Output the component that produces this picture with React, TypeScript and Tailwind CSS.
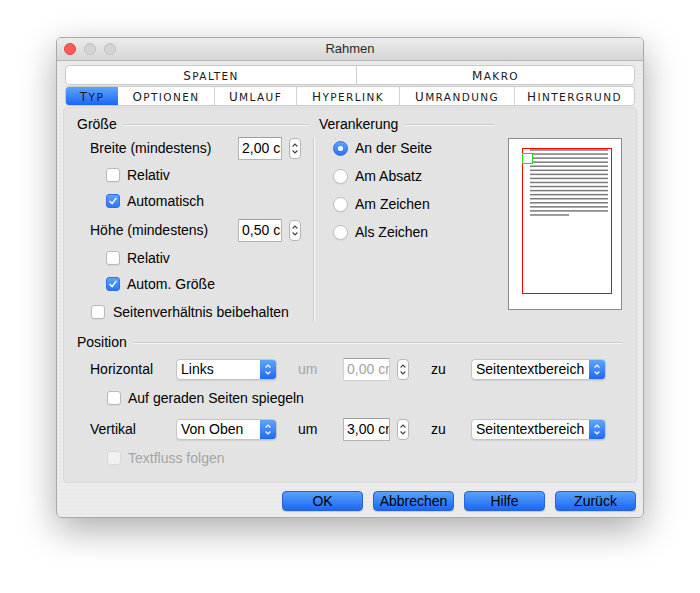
import React from "react";

function SC({ t }: { t: string }) {
  return (
    <span className="tracking-[1.4px] font-['DejaVu_Sans',sans-serif] text-[#1a1a1a]">
      <span className="text-[12px]">{t[0]}</span>
      <span className="text-[10.5px]">{t.slice(1).toUpperCase()}</span>
    </span>
  );
}

function Check({ checked = false, disabled = false }: { checked?: boolean; disabled?: boolean }) {
  if (checked)
    return (
      <span className="w-[14px] h-[14px] shrink-0 rounded-[3px] bg-linear-to-b from-[#5ea3fd] to-[#2b74f7] border border-[#2f6fe0] flex items-center justify-center">
        <svg width="10" height="10" viewBox="0 0 10 10">
          <path d="M2 5.4 L4.1 7.6 L8 2.4" fill="none" stroke="white" strokeWidth="1.5" strokeLinecap="round" strokeLinejoin="round" />
        </svg>
      </span>
    );
  return (
    <span
      className={`w-[14px] h-[14px] shrink-0 rounded-[3px] border ${
        disabled ? "border-[#d8d8d8] bg-[#f1f1f1]" : "border-[#b9b9b9] bg-white shadow-[0_1px_1px_rgba(0,0,0,0.06)]"
      }`}
    />
  );
}

function Radio({ on = false }: { on?: boolean }) {
  if (on)
    return (
      <span className="w-[15px] h-[15px] shrink-0 rounded-full bg-linear-to-b from-[#5ea3fd] to-[#2b74f7] border border-[#2f6fe0] flex items-center justify-center">
        <span className="w-[5px] h-[5px] rounded-full bg-white" />
      </span>
    );
  return <span className="w-[15px] h-[15px] shrink-0 rounded-full bg-white border border-[#bcbcbc] shadow-[0_1px_1px_rgba(0,0,0,0.06)]" />;
}

function Stepper() {
  return (
    <span className="w-[12px] h-[21px] shrink-0 rounded-[4px] bg-white border border-[#b5b5b5] flex items-center justify-center">
      <svg width="8" height="15" viewBox="0 0 8 15">
        <path d="M1.6 5.5 L4 3 L6.4 5.5 M1.6 9.5 L4 12 L6.4 9.5" stroke="#444" strokeWidth="1.1" fill="none" />
      </svg>
    </span>
  );
}

function Input({ v, w, disabled = false }: { v: string; w: string; disabled?: boolean }) {
  return (
    <div
      className={`${w} h-[23px] shrink-0 bg-white border border-[#b3b3b3] border-t-[#9e9e9e] pl-[3px] text-[14px] leading-[21px] overflow-hidden whitespace-nowrap ${
        disabled ? "text-[#a3a3a3] border-[#d0d0d0]" : "text-black"
      }`}
    >
      {v}
    </div>
  );
}

function Select({ label, w }: { label: string; w: string }) {
  return (
    <div className={`${w} h-[21px] shrink-0 rounded-[4px] bg-white border border-[#c4c4c4] shadow-[0_1px_1px_rgba(0,0,0,0.08)] flex overflow-hidden`}>
      <div className="flex-1 pl-[4px] text-[14px] leading-[19px] text-black whitespace-nowrap overflow-hidden">{label}</div>
      <div className="w-[16px] shrink-0 bg-linear-to-b from-[#5ea3fd] to-[#1d6af5] flex items-center justify-center">
        <svg width="8" height="15" viewBox="0 0 8 15">
          <path d="M1.6 5.5 L4 3 L6.4 5.5 M1.6 9.5 L4 12 L6.4 9.5" stroke="white" strokeWidth="1.2" fill="none" />
        </svg>
      </div>
    </div>
  );
}

function Heading({ t, cls }: { t: string; cls: string }) {
  return (
    <div className={`h-[20px] flex items-center ${cls}`}>
      <span className="text-[14px] text-black">{t}</span>
      <span className="flex-1 ml-[6px] h-[1px] bg-[#cbcbcb] shadow-[0_1px_0_#f6f6f6]" />
    </div>
  );
}

function CheckRow({ label, checked, h, pl, gap = "ml-[7px]", disabled = false }: { label: string; checked?: boolean; h: string; pl: string; gap?: string; disabled?: boolean }) {
  return (
    <div className={`${h} ${pl} flex items-center`}>
      <Check checked={checked} disabled={disabled} />
      <span className={`${gap} text-[14px] ${disabled ? "text-[#a5a5a5]" : "text-black"}`}>{label}</span>
    </div>
  );
}

function Preview() {
  const lines = [];
  for (let i = 0; i < 17; i++) {
    const y = 12 + i * 4.06;
    lines.push(<rect key={i} x={22} y={y - 0.75} width={i === 16 ? 39 : 78} height={1.5} fill="#7a7a7a" />);
  }
  return (
    <svg width="114" height="172" viewBox="0 0 114 172" className="shrink-0">
      <rect x="0.5" y="0.5" width="113" height="171" fill="white" stroke="#8c8c8c" />
      <rect x="14.5" y="10.5" width="89" height="145" fill="white" stroke="#ff0000" />
      {lines}
      <rect x="14.5" y="15.5" width="10" height="10" fill="white" stroke="#22dd11" />
    </svg>
  );
}

function Btn({ t }: { t: string }) {
  return (
    <div className="w-[81px] h-[20px] rounded-[4px] bg-linear-to-b from-[#58a0fd] to-[#1b66f4] border border-[#2a63d6] shadow-[0_1px_1px_rgba(0,0,0,0.15)] flex items-center justify-center text-[14px] text-black">
      {t}
    </div>
  );
}

export default function App() {
  return (
    <div className="w-[700px] h-[593px] bg-white pt-[37px] pl-[56px] font-['Liberation_Sans',Arial,sans-serif] overflow-hidden">
      <div className="w-[588px] h-[481px] rounded-[5px] border border-[#a9a9a9] shadow-[0_12px_36px_rgba(0,0,0,0.33)] overflow-hidden flex flex-col bg-[repeating-linear-gradient(0deg,#ececec_0px,#ececec_2px,#e9e9e9_2px,#e9e9e9_4px)]">
        {/* Title bar */}
        <div className="h-[23px] shrink-0 relative flex items-center pl-[7px] gap-[8px] bg-linear-to-b from-[#ececec] to-[#d6d6d6] border-b border-[#b6b6b6]">
          <span className="w-[12px] h-[12px] rounded-full bg-[#fc5b57] border border-[#e2463f]" />
          <span className="w-[12px] h-[12px] rounded-full bg-[#d3d3d3] border border-[#c2c2c2]" />
          <span className="w-[12px] h-[12px] rounded-full bg-[#d3d3d3] border border-[#c2c2c2]" />
          <span className="absolute inset-0 flex items-center justify-center text-[13px] text-[#2a2a2a]">Rahmen</span>
        </div>

        <div className="flex-1 flex flex-col px-[6px] pt-[4px]">
          {/* Tabs */}
          <div className="mx-[2px] flex flex-col gap-[1px]">
            <div className="h-[20px] flex rounded-[4px] bg-white border border-[#c9c9c9] overflow-hidden">
              <div className="w-[291px] flex items-center justify-center border-r border-[#cfcfcf]"><SC t="Spalten" /></div>
              <div className="flex-1 flex items-center justify-center"><SC t="Makro" /></div>
            </div>
            <div className="h-[20px] flex rounded-[4px] bg-white border border-[#c9c9c9] overflow-hidden">
              <div className="w-[52px] flex items-center justify-center bg-linear-to-b from-[#5ea3fd] to-[#1b65f5]"><SC t="Typ" /></div>
              <div className="w-[97px] flex items-center justify-center border-r border-[#d3d3d3]"><SC t="Optionen" /></div>
              <div className="w-[82px] flex items-center justify-center border-r border-[#d3d3d3]"><SC t="Umlauf" /></div>
              <div className="w-[103px] flex items-center justify-center border-r border-[#d3d3d3]"><SC t="Hyperlink" /></div>
              <div className="w-[115px] flex items-center justify-center border-r border-[#d3d3d3]"><SC t="Umrandung" /></div>
              <div className="flex-1 flex items-center justify-center"><SC t="Hintergrund" /></div>
            </div>
          </div>

          {/* Panel */}
          <div className="mt-[1px] h-[376px] rounded-[4px] bg-[#e3e3e3] border border-[#dadada] flex flex-col">
            <div className="flex pt-[6px]">
              {/* Left column */}
              <div className="w-[249px] flex flex-col">
                <Heading t="Größe" cls="pl-[13px] pr-[4px]" />
                <div className="h-[28px] pl-[26px] flex items-center">
                  <span className="w-[148px] text-[14px] text-black">Breite (mindestens)</span>
                  <Input v="2,00 cm" w="w-[44px]" />
                  <span className="ml-[7px]"><Stepper /></span>
                </div>
                <CheckRow label="Relativ" h="h-[26px]" pl="pl-[42px]" />
                <CheckRow label="Automatisch" checked h="h-[26px]" pl="pl-[42px]" />
                <div className="h-[32px] pl-[26px] flex items-center">
                  <span className="w-[148px] text-[14px] text-black">Höhe (mindestens)</span>
                  <Input v="0,50 cm" w="w-[44px]" />
                  <span className="ml-[7px]"><Stepper /></span>
                </div>
                <CheckRow label="Relativ" h="h-[24px]" pl="pl-[42px]" />
                <CheckRow label="Autom. Größe" checked h="h-[28px]" pl="pl-[42px]" />
                <CheckRow label="Seitenverhältnis beibehalten" h="h-[28px]" pl="pl-[27px]" gap="ml-[8px]" />
              </div>
              {/* Right column */}
              <div className="flex">
                <div className="w-[181px] flex flex-col">
                  <Heading t="Verankerung" cls="pl-[6px]" />
                  <div className="flex">
                    <div className="w-[1px] mt-[4px] h-[185px] bg-[#cdcdcd] shadow-[1px_0_0_#f5f5f5]" />
                    <div className="flex flex-col pl-[19px]">
                      {["An der Seite", "Am Absatz", "Am Zeichen", "Als Zeichen"].map((t, i) => (
                        <div key={t} className="h-[28px] flex items-center">
                          <Radio on={i === 0} />
                          <span className="ml-[7px] text-[14px] text-black">{t}</span>
                        </div>
                      ))}
                    </div>
                  </div>
                </div>
                <div className="ml-[14px] mt-[24px]">
                  <Preview />
                </div>
              </div>
            </div>

            {/* Position */}
            <div className="mt-[6px] flex flex-col">
              <Heading t="Position" cls="pl-[13px] pr-[14px]" />
              <div className="h-[34px] pl-[26px] flex items-center">
                <span className="w-[86px] text-[14px] text-black">Horizontal</span>
                <Select label="Links" w="w-[101px]" />
                <span className="ml-[21px] w-[45px] text-[14px] text-[#a5a5a5]">um</span>
                <Input v="0,00 cm" w="w-[47px]" disabled />
                <span className="ml-[7px]"><Stepper /></span>
                <span className="ml-[22px] w-[40px] text-[14px] text-black">zu</span>
                <Select label="Seitentextbereich" w="w-[135px]" />
              </div>
              <CheckRow label="Auf geraden Seiten spiegeln" h="h-[24px]" pl="pl-[43px]" />
              <div className="h-[38px] pl-[26px] flex items-center">
                <span className="w-[86px] text-[14px] text-black">Vertikal</span>
                <Select label="Von Oben" w="w-[101px]" />
                <span className="ml-[21px] w-[45px] text-[14px] text-black">um</span>
                <Input v="3,00 cm" w="w-[47px]" />
                <span className="ml-[7px]"><Stepper /></span>
                <span className="ml-[22px] w-[40px] text-[14px] text-black">zu</span>
                <Select label="Seitentextbereich" w="w-[135px]" />
              </div>
              <CheckRow label="Textfluss folgen" h="h-[20px]" pl="pl-[43px]" disabled />
            </div>
          </div>

          {/* Buttons */}
          <div className="mt-[8px] pr-[1px] flex justify-end gap-[10px]">
            <Btn t="OK" />
            <Btn t="Abbrechen" />
            <Btn t="Hilfe" />
            <Btn t="Zurück" />
          </div>
        </div>
      </div>
    </div>
  );
}
